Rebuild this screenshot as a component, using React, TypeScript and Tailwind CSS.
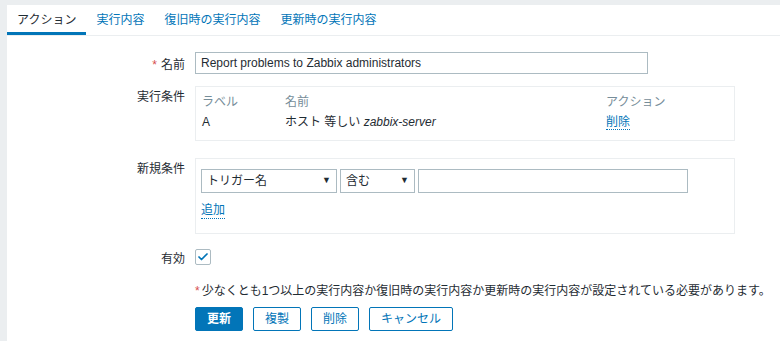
import { Check } from "lucide-react";

const font = { fontFamily: '"Liberation Sans", "Noto Sans CJK JP", sans-serif' };

function Tabs() {
  const tabs = ["アクション", "実行内容", "復旧時の実行内容", "更新時の実行内容"];
  return (
    <div className="flex h-[31px] border-b border-[#ebeef0]">
      {tabs.map((t, i) => (
        <div
          key={t}
          className={
            i === 0
              ? "flex items-center px-[10px] text-[#1f2c33] border-b-[3px] border-[#0275b8] pt-[3px]"
              : "flex items-center px-[10px] text-[#0275b8]"
          }
        >
          {t}
        </div>
      ))}
    </div>
  );
}

function Row({ label, required, children, labelTop }: { label: string; required?: boolean; children: React.ReactNode; labelTop?: string }) {
  return (
    <div className="flex">
      <div className={"w-[188px] pr-[10px] text-right text-[#1f2c33] " + (labelTop ?? "")}>
        {required && <span className="text-[#d64e4e] mr-[4px]">*</span>}
        {label}
      </div>
      <div className="flex-1">{children}</div>
    </div>
  );
}

function Select({ value, width }: { value: string; width: string }) {
  return (
    <div className={"flex items-center justify-between h-[24px] border border-[#acbbc2] px-[5px] text-[#1f2c33] " + width}>
      <span>{value}</span>
      <span className="text-[9px] text-[#1f2c33]">▼</span>
    </div>
  );
}

function Button({ label, primary, width }: { label: string; primary?: boolean; width: string }) {
  return (
    <div
      className={
        "flex items-center justify-center h-[24px] rounded-[2px] border " +
        width +
        (primary
          ? " bg-[#0275b8] border-[#0275b8] text-white font-bold"
          : " bg-white border-[#0275b8] text-[#0275b8]")
      }
    >
      {label}
    </div>
  );
}

export default function App() {
  return (
    <div className="w-[780px] h-[341px] bg-[#ebeef0] pl-[7px] pt-[5px] overflow-hidden text-[12px]" style={font}>
      <div className="bg-white h-full">
        <Tabs />
        <div className="pt-[16px] flex flex-col">
          <Row label="名前" required labelTop="pt-[4px]">
            <div className="w-[453px] h-[22px] border border-[#acbbc2] px-[5px] flex items-center text-[#1f2c33]">
              Report problems to Zabbix administrators
            </div>
          </Row>
          <div className="h-[12px]" />
          <Row label="実行条件" labelTop="pt-[2px]">
            <div className="w-[540px] border border-[#ebeef0] px-[6px] pt-[5px] pb-[8px]">
              <div className="flex text-[#768d99] h-[20px] items-center">
                <div className="w-[83px]">ラベル</div>
                <div className="w-[321px]">名前</div>
                <div>アクション</div>
              </div>
              <div className="flex text-[#1f2c33] h-[20px] items-center">
                <div className="w-[83px]">A</div>
                <div className="w-[321px]">
                  ホスト 等しい <i>zabbix-server</i>
                </div>
                <div className="text-[#0275b8] border-b border-dotted border-[#0275b8] leading-[14px]">削除</div>
              </div>
            </div>
          </Row>
          <div className="h-[17px]" />
          <Row label="新規条件" labelTop="pt-[2px]">
            <div className="w-[540px] h-[76px] border border-[#ebeef0] px-[5px] pt-[10px]">
              <div className="flex gap-[3px]">
                <Select value="トリガー名" width="w-[136px]" />
                <Select value="含む" width="w-[75px]" />
                <div className="w-[270px] h-[24px] border border-[#acbbc2]" />
              </div>
              <div className="mt-[10px] inline-block text-[#0275b8] border-b border-dotted border-[#0275b8] leading-[15px]">
                追加
              </div>
            </div>
          </Row>
          <div className="h-[15px]" />
          <Row label="有効" labelTop="pt-[1px]">
            <div className="w-[16px] h-[16px] border border-[#acbbc2] rounded-[2px] flex items-center justify-center">
              <Check size={12} strokeWidth={3.5} className="text-[#0275b8]" />
            </div>
          </Row>
          <div className="h-[14px]" />
          <Row label="">
            <div className="text-[#1f2c33]">
              <span className="text-[#d64e4e] mr-[2px]">*</span>
              少なくとも1つ以上の実行内容か復旧時の実行内容か更新時の実行内容が設定されている必要があります。
            </div>
          </Row>
          <div className="h-[7px]" />
          <Row label="">
            <div className="flex gap-[10px]">
              <Button label="更新" primary width="w-[48px]" />
              <Button label="複製" width="w-[48px]" />
              <Button label="削除" width="w-[48px]" />
              <Button label="キャンセル" width="w-[84px]" />
            </div>
          </Row>
        </div>
      </div>
    </div>
  );
}
